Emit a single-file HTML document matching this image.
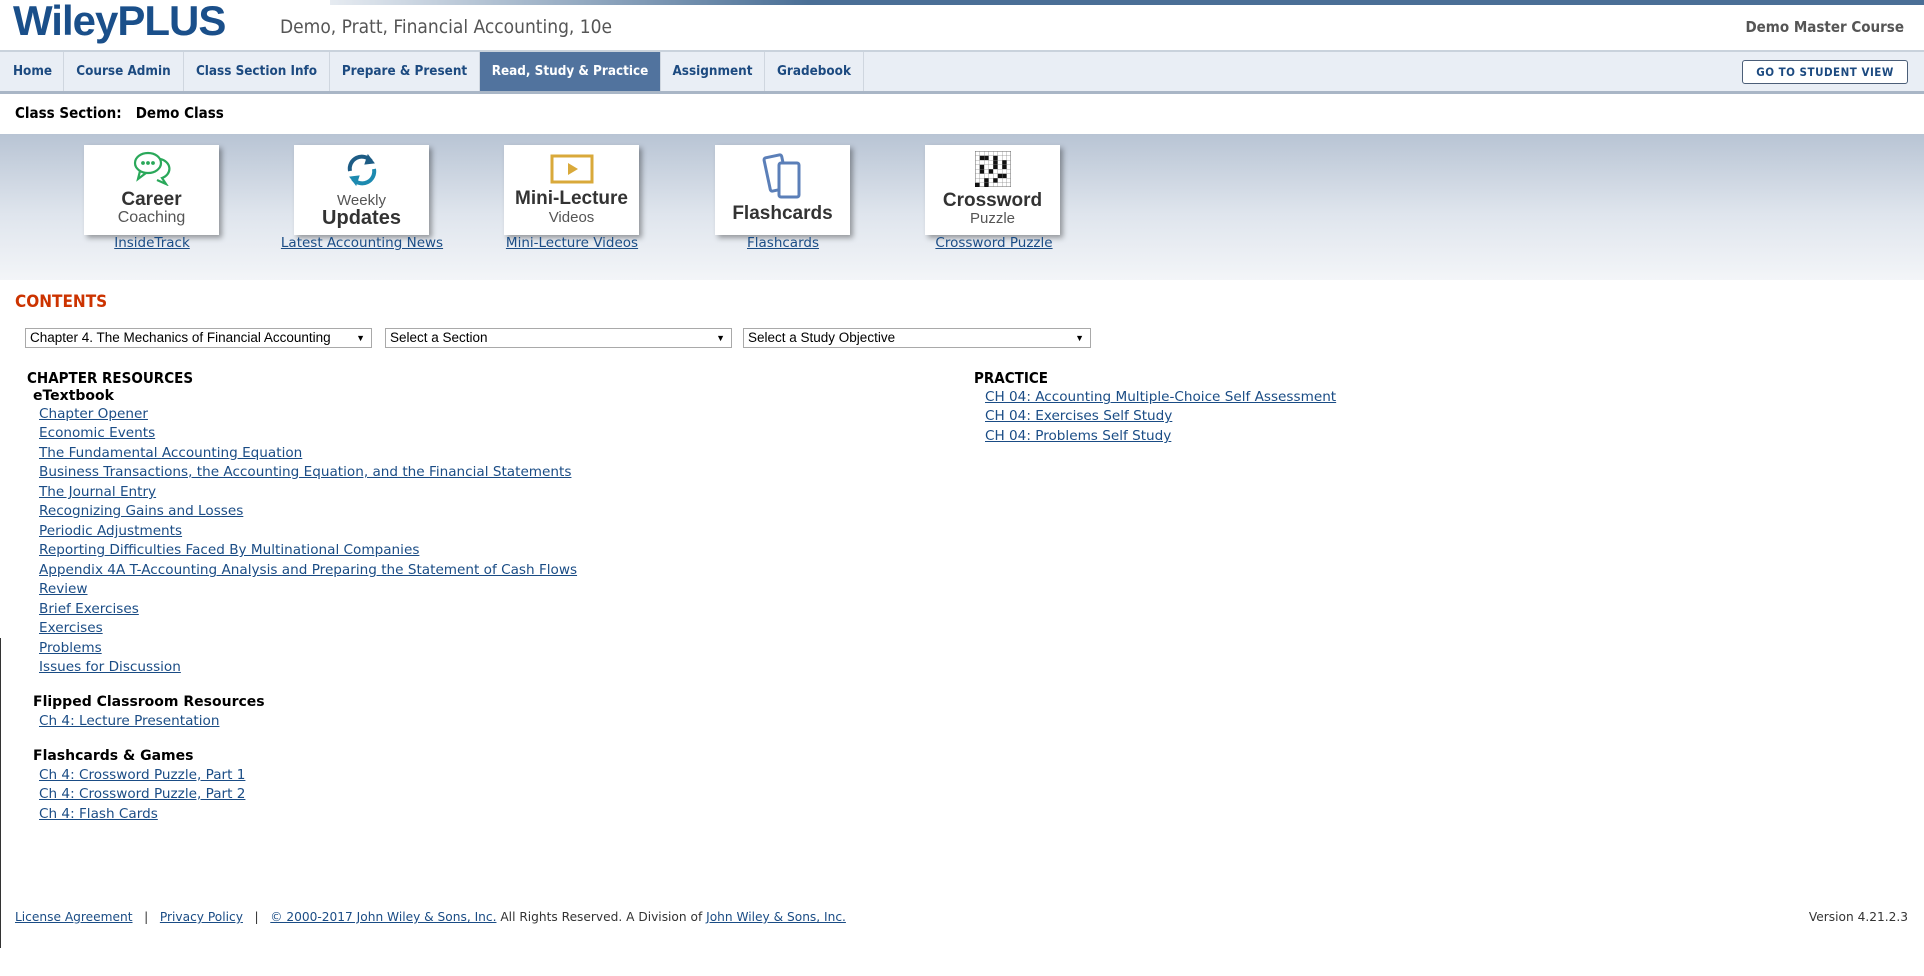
<!DOCTYPE html>
<html><head><meta charset="utf-8"><style>
*{margin:0;padding:0;box-sizing:border-box}
body{width:1924px;height:976px;position:relative;background:#fff;font-family:"DejaVu Sans",Verdana,sans-serif;overflow:hidden}
.a{position:absolute;white-space:nowrap}
a{color:#1a4c85;text-decoration:underline}
.topbar{position:absolute;left:330px;top:0;width:1594px;height:5px;background:linear-gradient(90deg,#e6ebf1,#4a6f96 30%,#4a6f96)}
.nav{position:absolute;left:0;top:50px;width:1924px;height:44px;background:#e9eef5;border-top:2px solid #c9d2dc;border-bottom:3px solid #a9b6c6}
.nav div{position:absolute;top:0;height:39px;line-height:39px;font-size:13.4px;font-weight:bold;color:#1c4a80;text-align:center;border-right:1px solid #cfd6df;font-family:"DejaVu Sans Condensed","DejaVu Sans",sans-serif}
.nav .act{background:#51739e;color:#fff}
.btn{position:absolute;left:1742px;top:60px;width:166px;height:24px;border:1px solid #4b5e78;border-radius:3px;background:#fff;font-size:11.5px;font-weight:bold;color:#1c4a80;text-align:center;line-height:22px;letter-spacing:.5px;font-family:"DejaVu Sans Condensed","DejaVu Sans",sans-serif}
.banner{position:absolute;left:0;top:134px;width:1924px;height:146px;background:linear-gradient(180deg,#b8c4d4,#dfe5ed 55%,#f3f5f8)}
.tile{position:absolute;top:145px;width:135px;height:90px;background:#fff;box-shadow:3px 3px 5px rgba(0,0,0,.35);text-align:center;font-family:"Liberation Sans",Arial,sans-serif;color:#333}
.tl{position:absolute;top:235px;font-size:13.5px;text-align:center;width:200px}
.lk{font-size:13.6px;position:absolute;left:39px}
.h{font-size:14px;font-weight:bold;color:#000;position:absolute}
.sel{position:absolute;top:328px;height:20px;border:1px solid #a9a9a9;font-size:13.5px;font-family:"Liberation Sans",Arial,sans-serif;padding-left:4px;line-height:18px;background:#fff}
.sel span{position:absolute;right:6px;font-size:9px}
</style></head><body>
<div class="topbar"></div>
<div class="a" style="left:13px;top:-3px;font-family:'Liberation Sans',Arial,sans-serif;font-weight:bold;font-size:42px;color:#1a4f8a;letter-spacing:-1px">WileyPLUS</div>
<div class="a" style="left:280px;top:16px;font-size:19px;color:#555;font-family:'DejaVu Sans Condensed','DejaVu Sans',sans-serif">Demo, Pratt, Financial Accounting, 10e</div>
<div class="a" style="right:20px;top:18px;font-size:15px;font-weight:bold;color:#555;font-family:'DejaVu Sans Condensed','DejaVu Sans',sans-serif">Demo Master Course</div>

<div class="nav">
<div style="left:2px;width:62px">Home</div>
<div style="left:64px;width:120px">Course Admin</div>
<div style="left:184px;width:146px">Class Section Info</div>
<div style="left:330px;width:150px">Prepare &amp; Present</div>
<div class="act" style="left:480px;width:181px">Read, Study &amp; Practice</div>
<div style="left:661px;width:104px">Assignment</div>
<div style="left:765px;width:99px">Gradebook</div>
</div>
<div class="btn">GO TO STUDENT VIEW</div>

<div class="a" style="left:15px;top:104px;font-size:15px;font-weight:bold;color:#000;font-family:'DejaVu Sans Condensed','DejaVu Sans',sans-serif">Class Section:&nbsp;&nbsp; Demo Class</div>

<div class="banner"></div>
<div class="tile" style="left:84px">
<svg width="44" height="36" viewBox="0 0 44 36" style="margin-top:5px" fill="none" stroke="#2aa85a" stroke-width="2.2"><ellipse cx="18" cy="13" rx="13" ry="10"/><path d="M10 21 L8 29 L16 23"/><path d="M30 9 A12 10 0 0 1 32 28 L36 34 L27 30"/><circle cx="13" cy="13" r=".8" fill="#2aa85a"/><circle cx="18" cy="13" r=".8" fill="#2aa85a"/><circle cx="23" cy="13" r=".8" fill="#2aa85a"/></svg>
<div style="font-size:19px;font-weight:bold;line-height:18px;margin-top:0">Career</div><div style="font-size:16px;color:#555">Coaching</div></div>
<div class="tile" style="left:294px">
<svg width="40" height="38" viewBox="0 0 40 38" style="margin-top:6px" fill="none" stroke-width="4"><path d="M8 20 A12 12 0 0 1 29 10" stroke="#1d5c85"/><path d="M26 4 L32 12 L23 13Z" fill="#1d5c85" stroke="#1d5c85" stroke-width="1"/><path d="M32 18 A12 12 0 0 1 11 28" stroke="#1d8ab0"/><path d="M14 34 L8 26 L17 25Z" fill="#1d8ab0" stroke="#1d8ab0" stroke-width="1"/></svg>
<div style="font-size:15px;color:#555;line-height:14px">Weekly</div><div style="font-size:20px;font-weight:bold;line-height:20px">Updates</div></div>
<div class="tile" style="left:504px">
<svg width="44" height="30" viewBox="0 0 44 30" style="margin-top:9px"><rect x="2" y="2" width="40" height="26" fill="none" stroke="#d9a93a" stroke-width="3"/><path d="M18 9 L28 15 L18 21Z" fill="#d9a93a"/></svg>
<div style="font-size:19px;font-weight:bold;line-height:20px">Mini-Lecture</div><div style="font-size:15px;color:#555">Videos</div></div>
<div class="tile" style="left:715px">
<svg width="48" height="46" viewBox="0 0 48 46" style="margin-top:8px" fill="#fff" stroke="#5b7fb8" stroke-width="3"><rect x="8" y="3" width="18" height="34" rx="2" transform="rotate(-12 17 20)"/><rect x="20" y="10" width="20" height="34" rx="2"/></svg>
<div style="font-size:19px;font-weight:bold;line-height:20px">Flashcards</div></div>
<div class="tile" style="left:925px">
<svg width="36" height="36" viewBox="0 0 8 8" style="margin-top:6px" shape-rendering="crispEdges"><rect width="8" height="8" fill="#fff" stroke="#666" stroke-width=".15"/><path d="M1 1h2v1h-2zM4 1h1v3h-1zM1 3h1v2h-1zM3 4h1v1h-1zM2 6h1v2h-1zM5 5h2v1h-2zM6 2h1v2h-1zM0 7h1v1h-1zM4 6h1v1h-1z" fill="#111"/><path d="M0 1H8M0 2H8M0 3H8M0 4H8M0 5H8M0 6H8M0 7H8M1 0V8M2 0V8M3 0V8M4 0V8M5 0V8M6 0V8M7 0V8" stroke="#888" stroke-width=".08"/></svg>
<div style="font-size:19px;font-weight:bold;line-height:18px">Crossword</div><div style="font-size:15px;color:#555">Puzzle</div></div>
<a class="a tl" style="left:52px">InsideTrack</a>
<a class="a tl" style="left:262px">Latest Accounting News</a>
<a class="a tl" style="left:472px">Mini-Lecture Videos</a>
<a class="a tl" style="left:683px">Flashcards</a>
<a class="a tl" style="left:894px">Crossword Puzzle</a>

<div class="a" style="left:15px;top:292px;font-size:17px;font-weight:bold;color:#cc3300;font-family:'DejaVu Sans Condensed','DejaVu Sans',sans-serif">CONTENTS</div>
<div class="sel" style="left:25px;width:347px">Chapter 4. The Mechanics of Financial Accounting<span>▼</span></div>
<div class="sel" style="left:385px;width:347px">Select a Section<span>▼</span></div>
<div class="sel" style="left:743px;width:348px">Select a Study Objective<span>▼</span></div>

<div class="h a" style="left:27px;top:369px;font-size:15px;font-family:'DejaVu Sans Condensed','DejaVu Sans',sans-serif">CHAPTER RESOURCES</div>
<div class="h a" style="left:33px;top:388px">eTextbook</div>
<a class="a lk" style="top:406px">Chapter Opener</a>
<a class="a lk" style="top:425px">Economic Events</a>
<a class="a lk" style="top:445px">The Fundamental Accounting Equation</a>
<a class="a lk" style="top:464px">Business Transactions, the Accounting Equation, and the Financial Statements</a>
<a class="a lk" style="top:484px">The Journal Entry</a>
<a class="a lk" style="top:503px">Recognizing Gains and Losses</a>
<a class="a lk" style="top:523px">Periodic Adjustments</a>
<a class="a lk" style="top:542px">Reporting Difficulties Faced By Multinational Companies</a>
<a class="a lk" style="top:562px">Appendix 4A T-Accounting Analysis and Preparing the Statement of Cash Flows</a>
<a class="a lk" style="top:581px">Review</a>
<a class="a lk" style="top:601px">Brief Exercises</a>
<a class="a lk" style="top:620px">Exercises</a>
<a class="a lk" style="top:640px">Problems</a>
<a class="a lk" style="top:659px">Issues for Discussion</a>
<div class="h a" style="left:33px;top:694px">Flipped Classroom Resources</div>
<a class="a lk" style="top:713px">Ch 4: Lecture Presentation</a>
<div class="h a" style="left:33px;top:748px">Flashcards &amp; Games</div>
<a class="a lk" style="top:767px">Ch 4: Crossword Puzzle, Part 1</a>
<a class="a lk" style="top:786px">Ch 4: Crossword Puzzle, Part 2</a>
<a class="a lk" style="top:806px">Ch 4: Flash Cards</a>

<div class="h a" style="left:974px;top:369px;font-size:15px;font-family:'DejaVu Sans Condensed','DejaVu Sans',sans-serif">PRACTICE</div>
<a class="a lk" style="left:985px;top:389px">CH 04: Accounting Multiple-Choice Self Assessment</a>
<a class="a lk" style="left:985px;top:408px">CH 04: Exercises Self Study</a>
<a class="a lk" style="left:985px;top:428px">CH 04: Problems Self Study</a>

<div style="position:absolute;left:0;top:638px;width:1px;height:310px;background:#333"></div>
<div class="a" style="left:15px;top:910px;font-size:12.2px;color:#333;font-family:'DejaVu Sans',sans-serif"><a>License Agreement</a> &nbsp; | &nbsp; <a>Privacy Policy</a> &nbsp; | &nbsp; <a>© 2000-2017 John Wiley &amp; Sons, Inc.</a> All Rights Reserved. A Division of <a>John Wiley &amp; Sons, Inc.</a></div>
<div class="a" style="right:16px;top:910px;font-size:12.2px;color:#333;font-family:'DejaVu Sans',sans-serif">Version 4.21.2.3</div>
</body></html>
